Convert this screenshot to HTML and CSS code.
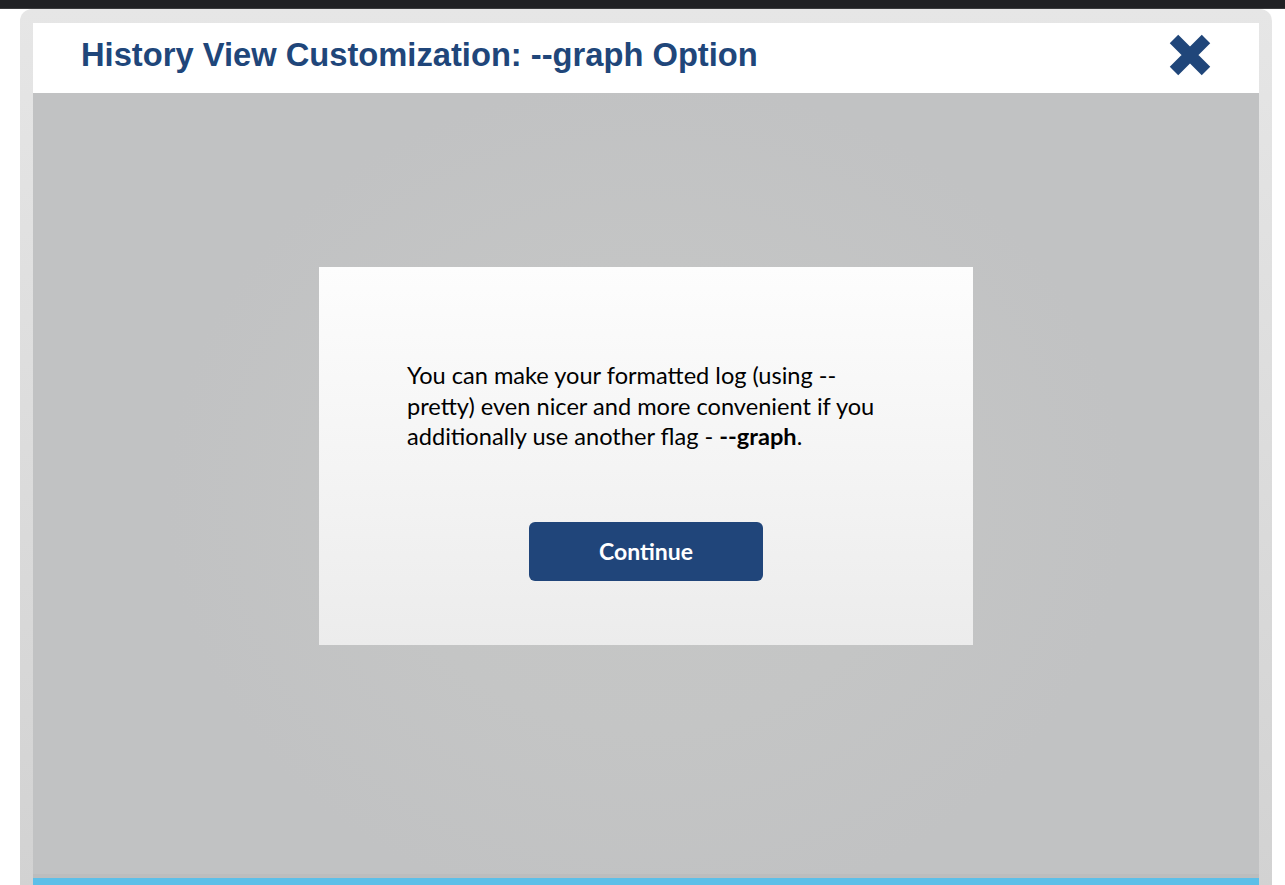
FILE: index.html
```html
<!DOCTYPE html>
<html lang="en">
<head>
<meta charset="utf-8">
<title>History View Customization: --graph Option</title>
<link rel="stylesheet" href="styles.css">
</head>
<body>
<div class="topbar"></div>
<div class="frame">
  <header class="header">
    <h1 class="title">History View Customization: --graph Option</h1>
    <button class="close" aria-label="Close">
      <svg width="44" height="44" viewBox="0 0 44 44">
        <path d="M6 6 L38 38 M38 6 L6 38" stroke="#20467a" stroke-width="12" stroke-linecap="butt" stroke-linejoin="round" fill="none"/>
      </svg>
    </button>
  </header>
  <main class="stage">
    <section class="dialog">
      <p class="message">You can make your formatted log (using --pretty) even nicer and more convenient if you additionally use another flag - <b>--graph</b>.</p>
      <button class="continue">Continue</button>
    </section>
  </main>
  <div class="progress"></div>
</div>
</body>
</html>
```
FILE: styles.css
```css
html, body {
  margin: 0;
  padding: 0;
  background: #ffffff;
  overflow: hidden;
  height: 885px;
}
.topbar {
  height: 8px;
  background: #202124;
  border-bottom: 1px solid #3a3b3d;
}
.frame {
  width: 1226px;
  margin-left: 20px;
  padding: 14px 13px 0;
  border-radius: 12px 12px 0 0;
  background: linear-gradient(#e6e6e6, #d2d2d2);
}
.header {
  height: 70px;
  box-sizing: border-box;
  background: #ffffff;
  display: flex;
  align-items: center;
  justify-content: space-between;
  padding: 0 47px 6px 48px;
}
.title {
  margin: 0;
  font-family: "Liberation Sans", Arial, sans-serif;
  font-weight: bold;
  font-size: 32.7px;
  color: #20467a;
}
.close {
  border: 0;
  background: none;
  padding: 0;
  margin: 0;
  display: flex;
  cursor: pointer;
}
.stage {
  height: 781px;
  display: flex;
  flex-direction: column;
  align-items: center;
  background: radial-gradient(ellipse 480px 420px at 50% 52%, #c6c7c6 0%, #c4c5c5 55%, #c1c2c3 100%);
  border-bottom: 4px solid #bcbdbe;
}
.dialog {
  margin-top: 174px;
  width: 654px;
  height: 378px;
  box-sizing: border-box;
  padding: 93px 88px 0;
  background: linear-gradient(#fdfdfd, #ececec);
  display: flex;
  flex-direction: column;
  align-items: center;
}
.message {
  margin: 0;
  width: 100%;
  font-family: Lato, "Open Sans", sans-serif;
  font-size: 23.6px;
  line-height: 30.5px;
  color: #000000;
}
.message b {
  font-weight: bold;
}
.continue {
  margin-top: 70px;
  width: 234px;
  height: 59px;
  border: 0;
  border-radius: 6px;
  background: #20457a;
  color: #ffffff;
  font-family: Lato, "Open Sans", sans-serif;
  font-weight: bold;
  font-size: 23px;
  cursor: pointer;
}
.progress {
  height: 10px;
  background: #5dbfe8;
}
```
